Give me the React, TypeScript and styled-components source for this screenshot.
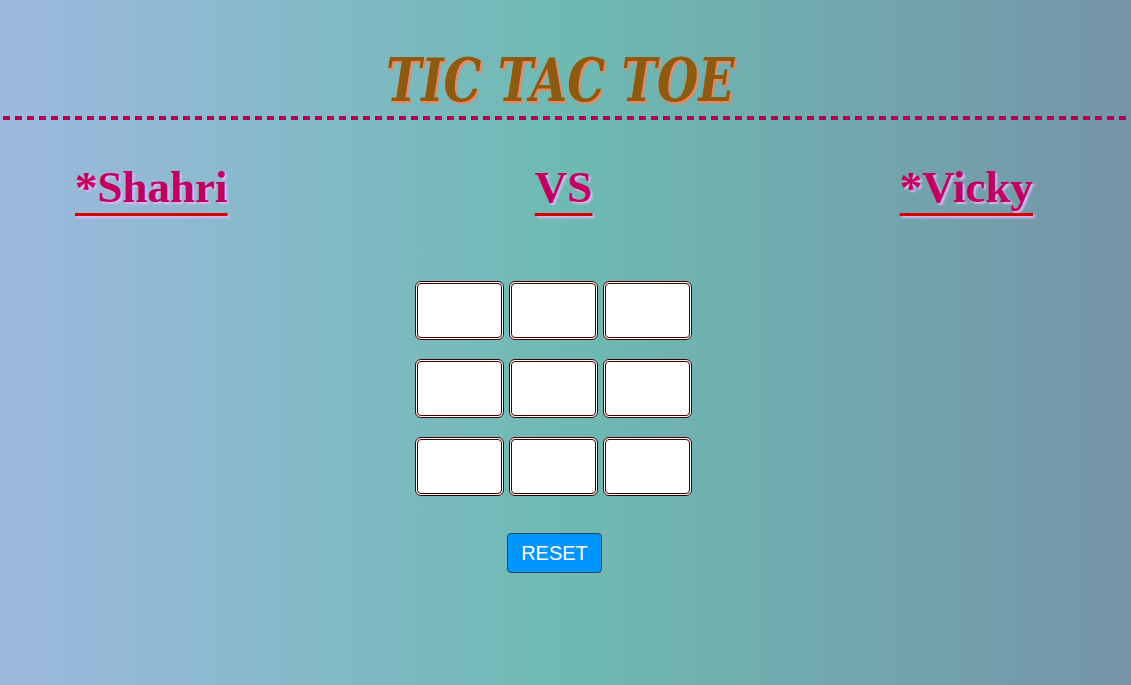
import styled, { createGlobalStyle } from "styled-components";

const GlobalStyle = createGlobalStyle`
  html, body {
    margin: 0;
    padding: 0;
  }
  body {
    min-height: 100vh;
    background: linear-gradient(to right, #9db9df 0%, #6ebab3 50%, #7595a8 100%);
    font-family: "Liberation Serif", serif;
  }
`;

const Page = styled.div`
  min-height: 685px;
  display: flex;
  flex-direction: column;
`;

const Title = styled.h1`
  margin: 41px 0 0;
  text-align: center;
  font-family: "DejaVu Serif Condensed", "DejaVu Serif", serif;
  font-stretch: condensed;
  font-style: italic;
  font-weight: bold;
  font-size: 60px;
  line-height: 79px;
  color: #8d5a12;
  text-shadow: 2px 2px 2px #ff7f50;
  transform: scaleX(0.88) translateX(-6px);
`;

const Divider = styled.div`
  height: 4px;
  margin-top: -4px;
  background: repeating-linear-gradient(
    to right,
    transparent 0 3px,
    #b3004f 3px 10px,
    transparent 10px 12px
  );
`;

const Players = styled.div`
  display: flex;
  justify-content: space-between;
  align-items: baseline;
  padding: 0 98px 0 75px;
  margin-top: 40px;
`;

const Player = styled.span`
  font-family: "Liberation Serif", serif;
  font-weight: bold;
  font-size: 45px;
  line-height: 55px;
  color: #c0005e;
  text-shadow: 2px 2px 2px #e9b3f0;
  text-decoration: underline;
  text-decoration-color: #d10000;
  text-decoration-thickness: 3px;
  text-underline-offset: 11px;
`;

const Board = styled.div`
  margin: 66px auto 0;
  display: grid;
  grid-template-columns: repeat(3, 89px);
  grid-auto-rows: 59px;
  column-gap: 5px;
  row-gap: 19px;
  transform: translateX(-12px);
`;

const Cell = styled.button`
  box-sizing: border-box;
  width: 89px;
  height: 59px;
  padding: 0;
  background: #ffffff;
  border: 3px double #3d0000;
  border-radius: 6px;
  font-family: "Liberation Sans", sans-serif;
  font-size: 32px;
  cursor: pointer;
`;

const ResetButton = styled.button`
  margin: 37px auto 0;
  transform: translateX(-11px);
  width: 95px;
  height: 40px;
  background: #0095ff;
  color: #ffffff;
  border: 1px solid #26465e;
  border-radius: 4px;
  font-family: "Liberation Sans", sans-serif;
  font-size: 20px;
  cursor: pointer;
`;

export default function App() {
  const cells = Array.from({ length: 9 });
  return (
    <>
      <GlobalStyle />
      <Page>
        <Title>TIC TAC TOE</Title>
        <Divider />
        <Players>
          <Player>*Shahri</Player>
          <Player>VS</Player>
          <Player>*Vicky</Player>
        </Players>
        <Board>
          {cells.map((_, i) => (
            <Cell key={i} />
          ))}
        </Board>
        <ResetButton>RESET</ResetButton>
      </Page>
    </>
  );
}
